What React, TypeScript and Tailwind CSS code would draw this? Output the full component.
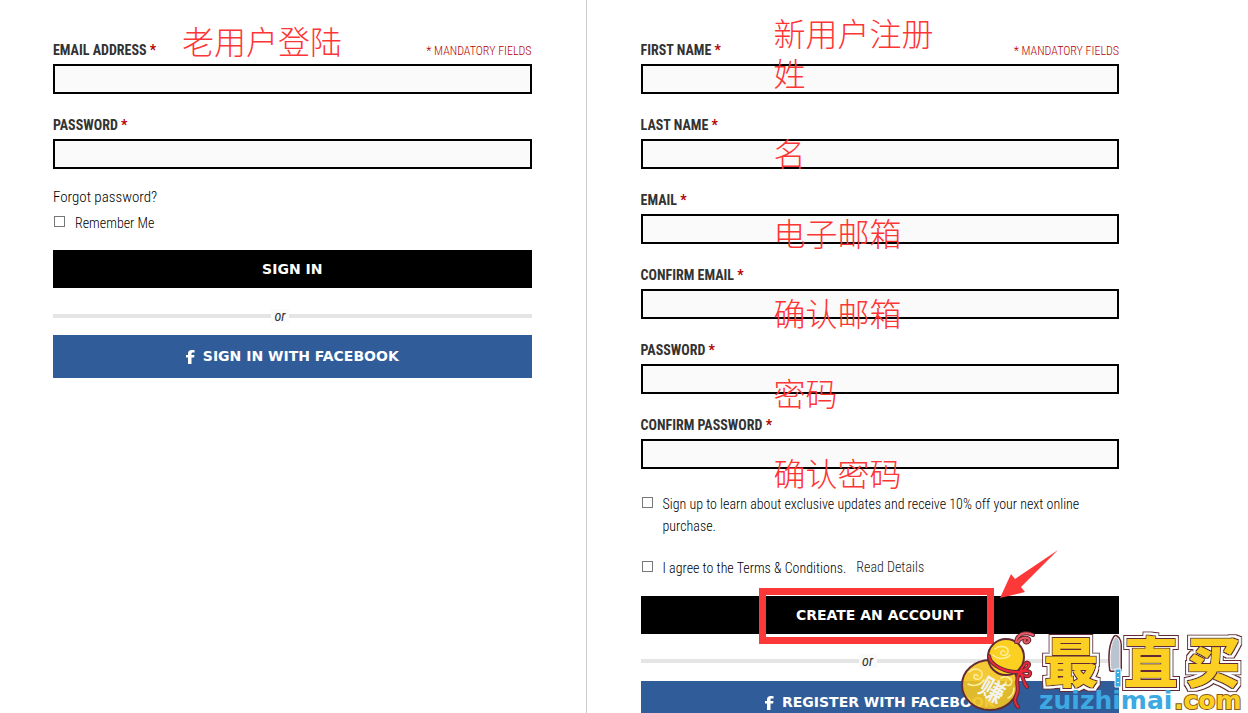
import React from 'react'

type FieldProps = {
    id: string
    label: string
    type?: string
    note?: boolean
}

const Field = ({ id, label, type = 'text', note }: FieldProps) => (
    <div>
        <div className="flex h-5 items-center justify-between mb-1">
            <label htmlFor={id} className="text-[14px] leading-5 font-bold text-[#333]">
                {label} <span className="text-[#b50000]">*</span>
            </label>
            {note && <span className="text-[12px] leading-5 pt-px font-light text-[#b50000]">* MANDATORY FIELDS</span>}
        </div>
        <input id={id} type={type} className="block w-full h-[30px] border-2 border-black bg-[#fafafa] px-2 outline-none" />
    </div>
)

const Check = ({ id, children }: { id: string; children: React.ReactNode }) => (
    <div className="flex items-start">
        <input id={id} type="checkbox" className="appearance-none shrink-0 w-[11px] h-[11px] mt-1 ml-px mr-[10px] border border-[#777] bg-white" />
        <label htmlFor={id} className="text-[14px] leading-[22px] font-light">{children}</label>
    </div>
)

const Or = () => (
    <div className="flex h-[14px] items-center">
        <div className="w-[218px] h-1 bg-[#e5e5e5]" />
        <span className="w-[18px] text-center text-[14px] leading-[14px] italic bg-[#fafafa] text-[#333]">or</span>
        <div className="flex-1 h-1 bg-[#e5e5e5]" />
    </div>
)

const FacebookButton = ({ children }: { children: string }) => (
    <button type="button" className="flex w-full h-[43px] items-center justify-center gap-2 bg-[#305c99] text-white font-['DejaVu_Sans'] font-bold text-[14px]">
        <svg width="9" height="14" viewBox="0 0 9 14" fill="currentColor" aria-hidden="true">
            <path d="M2 14V7.500H0V5h2V3.600C2 1.200 3.400 0 5.700 0 7 0 8.200.1 8.600.2v2.300H7C5.900 2.500 5.500 3 5.500 3.800V5h3l-.4 2.500H5.500V14z" />
        </svg>
        {children}
    </button>
)

const blackButton = "block w-full h-[38px] bg-black text-white font-['DejaVu_Sans'] font-bold text-[14px]"
const noteText = "absolute pointer-events-none whitespace-nowrap font-['Noto_Sans_CJK_SC',sans-serif] font-light text-[32px] leading-10 text-[#fe3535]"

const Logo = () => (
    <svg className="absolute left-[373px] top-[630px] overflow-visible pointer-events-none" width="288" height="84" viewBox="0 0 288 84" role="img" aria-label="zuizhimai.com">
        <defs>
            {/* maroon / white / maroon rings round the big glyphs */}
            <filter id="rings" x="-10%" y="-10%" width="120%" height="120%">
                <feMorphology in="SourceAlpha" operator="dilate" radius="4" result="a" />
                <feMorphology in="SourceAlpha" operator="dilate" radius="3" result="b" />
                <feMorphology in="SourceAlpha" operator="dilate" radius="1" result="c" />
                <feFlood floodColor="#632b35" result="maroon" />
                <feFlood floodColor="#fff" result="white" />
                <feComposite in="maroon" in2="a" operator="in" result="outer" />
                <feComposite in="white" in2="b" operator="in" result="middle" />
                <feComposite in="maroon" in2="c" operator="in" result="inner" />
                <feMerge>
                    <feMergeNode in="outer" />
                    <feMergeNode in="middle" />
                    <feMergeNode in="inner" />
                    <feMergeNode in="SourceGraphic" />
                </feMerge>
            </filter>
        </defs>
        {/* gourd */}
        <g stroke="#632b35" strokeWidth="2">
            <ellipse cx="30" cy="55" rx="28" ry="25" fill="#f2c420" fillOpacity="0.9" />
            <circle cx="46" cy="27" r="18" fill="#fbd021" />
        </g>
        <g fill="none" stroke="#fff0a0" strokeWidth="1.5" strokeLinecap="round">
            <path d="M35 19c4-4 14-3 13 3-1 5-9 4-7 0 1-2 4-1 4 0M33 25c5 5 14 4 17 0" />
            <path d="M9 42c5-5 14-3 13 3-1 6-9 5-8 1 0-2 3-2 4 0M8 54c6 3 13 1 16-4" />
            <path d="M41 48c6-3 13 1 10 6-2 3-7 1-5-2M48 68c4-2 6-6 6-10" />
        </g>
        <text x="20" y="69" fill="#f3f3ee" fontSize="25" fontWeight="700" fontFamily="'Noto Sans CJK SC', sans-serif" transform="rotate(30 32 60)">赚</text>
        <g fill="none" strokeLinecap="round" strokeLinejoin="round">
            <path d="M29 26c1 9 16 17 31 16M60 42c3-7 7-12 9-8 1 3-5 6-8 8 6-2 10-1 9 2-1 4-7 2-10-1 4 4 3 10 7 14M59 43c-5 10 2 16-3 23-2 5-1 8 2 11" stroke="#632b35" strokeWidth="4" />
            <path d="M29 26c1 9 16 17 31 16M60 42c3-7 7-12 9-8 1 3-5 6-8 8 6-2 10-1 9 2-1 4-7 2-10-1 4 4 3 10 7 14M59 43c-5 10 2 16-3 23-2 5-1 8 2 11" stroke="#ed2838" strokeWidth="2" />
            <path d="M56 12c1-8 9-11 17-7M58 12c3-6 13-5 11-1-2 3-6 1-4-1" stroke="#632b35" strokeWidth="4" />
            <path d="M56 12c1-8 9-11 17-7M58 12c3-6 13-5 11-1-2 3-6 1-4-1" stroke="#ef5a62" strokeWidth="2" />
        </g>
        <g fill="#fbd021" fontSize="54" fontWeight="900" fontFamily="'Noto Sans CJK SC', sans-serif" textAnchor="middle" filter="url(#rings)">
            <text x="111" y="53">最</text>
            <text x="191" y="53">直</text>
            <text x="253" y="53">买</text>
        </g>
        {/* knife */}
        <g strokeLinejoin="round">
            <path d="M151 40h9V15c0-5-3-9-5-8-4 6-6 17-4 33z" stroke="#632b35" strokeWidth="4" />
            <path d="M151 40h9V15c0-5-3-9-5-8-4 6-6 17-4 33z" fill="#b9c4cf" stroke="#fff" />
            <path d="M155 39h6v18h-6z" fill="#39ace4" stroke="#fff" />
            <path d="M158 42v1M158 47v1M158 52v1" stroke="#fff" strokeWidth="2" />
        </g>
        <g fontFamily="'DejaVu Sans'" fontWeight="700" fontSize="25">
            <text x="79" y="79" fill="#3ca9e2">zuizhimai</text>
            <text x="214" y="79" fill="#fbd021" stroke="#8a5a20" strokeWidth="2" paintOrder="stroke">.com</text>
        </g>
    </svg>
)

const SignIn = () => (
    <form className="relative border-r border-[#ccc] pt-10 pl-[53px] pr-[54px]">
        <div className="flex flex-col gap-[21px]">
            <Field id="login-email" label="EMAIL ADDRESS" note />
            <Field id="login-password" label="PASSWORD" type="password" />
        </div>
        <a href="#" className="block mt-[17px] mb-1 text-[15px] leading-[22px] font-light">Forgot password?</a>
        <Check id="remember">Remember Me</Check>
        <div className="mt-4">
            <button type="submit" className={blackButton}>SIGN IN</button>
        </div>
        <div className="mt-[21px] mb-3">
            <Or />
        </div>
        <FacebookButton>SIGN IN WITH FACEBOOK</FacebookButton>
        <p className={noteText + ' left-[182px] top-5'}>老用户登陆</p>
    </form>
)

const Register = () => (
    <form className="relative pt-10 pl-[54px] pr-[129px]">
        <div className="flex flex-col gap-[21px]">
            <Field id="first-name" label="FIRST NAME" note />
            <Field id="last-name" label="LAST NAME" />
            <Field id="email" label="EMAIL" type="email" />
            <Field id="confirm-email" label="CONFIRM EMAIL" type="email" />
            <Field id="password" label="PASSWORD" type="password" />
            <Field id="confirm-password" label="CONFIRM PASSWORD" type="password" />
        </div>
        <div className="mt-6 pr-5">
            <Check id="newsletter">Sign up to learn about exclusive updates and receive 10% off your next online purchase.</Check>
        </div>
        <div className="flex mt-5 gap-[10px]">
            <Check id="terms">I agree to the Terms &amp; Conditions.</Check>
            <a href="#" className="text-[14px] leading-5 font-light text-[#222]">Read Details</a>
        </div>
        <div className="relative mt-[17px]">
            <button type="submit" className={blackButton}>CREATE AN ACCOUNT</button>
            <div className="absolute left-[118px] -top-2 w-[235px] h-14 border-[7px] border-[#fd3838] pointer-events-none" />
            <svg className="absolute left-[358px] -top-12 pointer-events-none" width="60" height="52" viewBox="0 0 60 52">
                <path d="M1 50 12 26l4 5L59 2 22 39l4 5z" fill="#fd3838" />
            </svg>
        </div>
        <div className="mt-5 mb-[13px]">
            <Or />
        </div>
        <FacebookButton>REGISTER WITH FACEBOOK</FacebookButton>
        <div className={noteText + ' left-[187px] top-3'}>
            <p>新用户注册</p>
            <p className="mb-10">姓</p>
            <p className="mb-10">名</p>
            <p className="mb-10">电子邮箱</p>
            <p className="mb-10">确认邮箱</p>
            <p className="mb-10">密码</p>
            <p>确认密码</p>
        </div>
        <Logo />
    </form>
)

export default function App() {
    return (
        <main className="grid grid-cols-[47fr_53fr] h-screen overflow-hidden bg-white text-black font-['Roboto_Condensed','Liberation_Sans_Narrow','Liberation_Sans',sans-serif]">
            <SignIn />
            <Register />
        </main>
    )
}
